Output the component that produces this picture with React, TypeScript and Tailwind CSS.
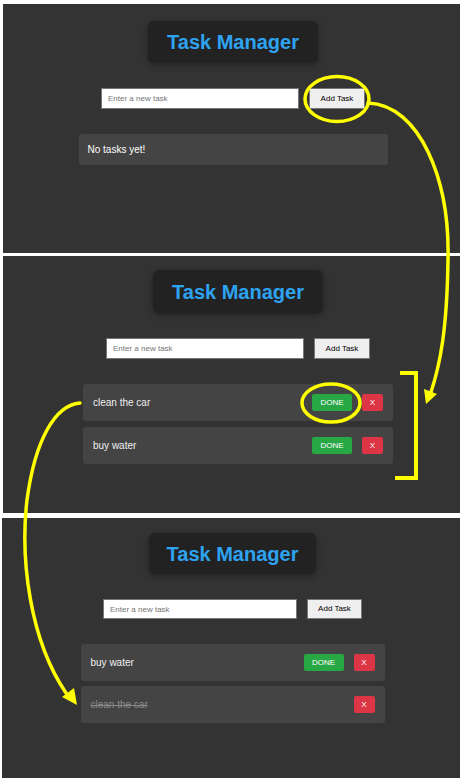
import React from "react";

type Task = { text: string; done: boolean };

type PanelProps = {
  className: string;
  headerCls: string;
  inputCls: string;
  btnCls: string;
  listCls: string;
  itemGap: string;
  tasks: Task[];
};

const Panel = ({ className, headerCls, inputCls, btnCls, listCls, itemGap, tasks }: PanelProps) => {
  return (
    <div className={`flex flex-col items-center bg-[#333333] ${className}`}>
      <div
        className={`flex items-center justify-center rounded-[6px] bg-[#222222] shadow-[0_2px_6px_rgba(0,0,0,0.35)] ${headerCls}`}
      >
        <h1 className="text-[20px] font-bold leading-none text-[#2ea3f2]">Task Manager</h1>
      </div>

      <div className="mt-[25px] flex items-center gap-[10px]">
        <input
          className={`border border-[#767676] bg-white px-[6px] text-[8px] text-black outline-none placeholder:text-[#757575] ${inputCls}`}
          placeholder="Enter a new task"
        />
        <button
          className={`border border-[#767676] bg-[#efefef] text-[8px] text-black ${btnCls}`}
        >
          Add Task
        </button>
      </div>

      <div className={`mt-[25px] flex flex-col ${itemGap} ${listCls}`}>
        {tasks.length === 0 ? (
          <div className="flex h-[31px] items-center rounded-[3px] bg-[#444444] px-[9px] text-[10px] text-white">
            No tasks yet!
          </div>
        ) : (
          tasks.map((t) => (
            <div
              key={t.text}
              className="flex h-[37px] items-center rounded-[3px] bg-[#444444] px-[10px]"
            >
              <span
                className={
                  t.done
                    ? "flex-1 text-[10px] text-[#8a8a8a] line-through"
                    : "flex-1 text-[10px] text-[#f0f0f0]"
                }
              >
                {t.text}
              </span>
              {!t.done && (
                <button className="h-[17px] w-[40px] rounded-[2px] bg-[#28a745] text-[8px] text-white">
                  DONE
                </button>
              )}
              <button className="ml-[10px] h-[17px] w-[21px] rounded-[2px] bg-[#dc3545] text-[8px] text-white">
                X
              </button>
            </div>
          ))
        )}
      </div>
    </div>
  );
};

const Annotations = () => (
  <svg
    className="pointer-events-none absolute inset-0"
    width="464"
    height="784"
    viewBox="0 0 464 784"
    fill="none"
  >
    <g stroke="#ffff00" strokeWidth="3.5" strokeLinecap="round" fill="none">
      <ellipse cx="337" cy="99" rx="32" ry="22.5" />
      <path d="M368,103 C420,105 450,180 448,260 C447,330 440,365 431,392" />
      <path d="M400,373 H416 V478 H395" strokeLinecap="butt" strokeWidth="4" />
      <ellipse cx="331" cy="403" rx="29" ry="19" />
      <path d="M80,403 C55,405 35,440 27,500 C20,560 30,640 66,693" />
    </g>
    <g fill="#ffff00">
      <polygon points="426,404 437,394 424,389" />
      <polygon points="77,705 74,688 62,697" />
    </g>
  </svg>
);

export default function App() {
  return (
    <div
      className="relative h-[784px] w-[464px] overflow-hidden bg-white"
      style={{ fontFamily: '"Liberation Sans", Arial, sans-serif' }}
    >
      <Panel
        className="ml-[3px] mt-[4px] h-[249px] w-[457px] pl-[3px] pt-[17px]"
        headerCls="h-[42px] w-[170px]"
        inputCls="h-[21px] w-[198px]"
        btnCls="h-[21px] w-[56px]"
        listCls="w-[309px]"
        itemGap="gap-[6px]"
        tasks={[]}
      />
      <Panel
        className="ml-[3px] mt-[3px] h-[257px] w-[457px] pl-[13px] pt-[14px]"
        headerCls="h-[43px] w-[170px]"
        inputCls="h-[21px] w-[198px]"
        btnCls="h-[21px] w-[56px]"
        listCls="w-[310px]"
        itemGap="gap-[6px]"
        tasks={[
          { text: "clean the car", done: false },
          { text: "buy water", done: false },
        ]}
      />
      <Panel
        className="ml-[2px] mt-[5px] h-[260px] w-[458px] pl-[3px] pt-[15px]"
        headerCls="h-[41px] w-[167px]"
        inputCls="h-[20px] w-[194px]"
        btnCls="h-[20px] w-[55px]"
        listCls="w-[304px]"
        itemGap="gap-[5px]"
        tasks={[
          { text: "buy water", done: false },
          { text: "clean the car", done: true },
        ]}
      />
      <Annotations />
    </div>
  );
}
